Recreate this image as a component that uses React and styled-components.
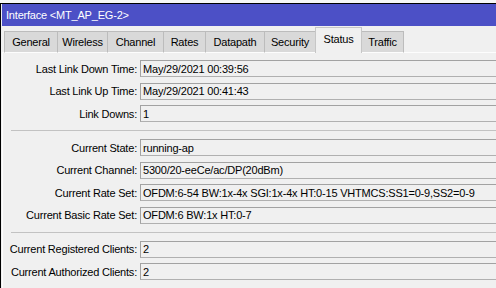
import React from 'react';
import styled, { createGlobalStyle } from 'styled-components';

const GlobalStyle = createGlobalStyle`
  html, body {
    margin: 0;
    padding: 0;
    overflow: hidden;
    background: #f4f4f4;
  }
  body {
    font-family: "Liberation Sans", Arial, sans-serif;
    font-size: 11px;
    letter-spacing: -0.2px;
    color: #000;
  }
`;

const Backdrop = styled.div`
  height: 3px;
  background: #f6f6f6;
`;

const Window = styled.div`
  height: 285px;
  box-sizing: border-box;
  border-top: 1px solid #000;
  border-left: 1px solid #000;
  padding-left: 1px;
  background: #f0f0f0;
  display: flex;
  flex-direction: column;
  overflow: hidden;
`;

const TitleBar = styled.div`
  height: 22px;
  flex-shrink: 0;
  background: #4c50c6;
  color: #fff;
  display: flex;
  align-items: center;
  padding-left: 4px;
`;

const TabRow = styled.div`
  display: flex;
  align-items: flex-end;
  height: 27px;
  flex-shrink: 0;
  padding-left: 2px;
  position: relative;
  z-index: 1;
  margin-bottom: -1px;
`;

const Tab = styled.div`
  width: ${p => p.$w}px;
  height: ${p => (p.$active ? 26 : 22)}px;
  margin-left: -1px;
  box-sizing: border-box;
  display: flex;
  align-items: center;
  justify-content: center;
  padding-bottom: ${p => (p.$active ? 3 : 0)}px;
  background: ${p => (p.$active ? '#f0f0f0' : '#d9d9d9')};
  border: 1px solid ${p => (p.$active ? '#c6c6c6' : '#bcbcbc')};
  border-bottom: ${p => (p.$active ? 'none' : '1px solid #fdfdfd')};
  position: relative;
  z-index: ${p => (p.$active ? 2 : 1)};
  &:first-child {
    margin-left: 0;
  }
`;

const Panel = styled.div`
  flex: 1;
  border-top: 1px solid #fdfdfd;
  border-left: 1px solid #fdfdfd;
  padding-top: 7px;
  display: flex;
  flex-direction: column;
`;

const Group = styled.div`
  display: flex;
  flex-direction: column;
  gap: 5.5px;
`;

const Separator = styled.div`
  height: 1px;
  background: #c2c2c2;
  margin: 8px 0 8px 8px;
`;

const Row = styled.div`
  display: flex;
  align-items: center;
  gap: 3px;
`;

const Label = styled.div`
  width: 134px;
  flex-shrink: 0;
  text-align: right;
  white-space: nowrap;
`;

const Field = styled.div`
  flex: 1;
  min-width: 0;
  height: 17px;
  box-sizing: border-box;
  border: 1px solid #a2a2a2;
  border-right: none;
  border-bottom-color: #b0b0b0;
  padding-left: 2px;
  display: flex;
  align-items: center;
  white-space: nowrap;
  overflow: hidden;
`;

const tabs = [
  { name: 'General', w: 54 },
  { name: 'Wireless', w: 51 },
  { name: 'Channel', w: 57 },
  { name: 'Rates', w: 43 },
  { name: 'Datapath', w: 60 },
  { name: 'Security', w: 52 },
  { name: 'Status', w: 47, active: true },
  { name: 'Traffic', w: 43 },
];

const groups = [
  [
    ['Last Link Down Time:', 'May/29/2021 00:39:56'],
    ['Last Link Up Time:', 'May/29/2021 00:41:43'],
    ['Link Downs:', '1'],
  ],
  [
    ['Current State:', 'running-ap'],
    ['Current Channel:', '5300/20-eeCe/ac/DP(20dBm)'],
    ['Current Rate Set:', 'OFDM:6-54 BW:1x-4x SGI:1x-4x HT:0-15 VHTMCS:SS1=0-9,SS2=0-9'],
    ['Current Basic Rate Set:', 'OFDM:6 BW:1x HT:0-7'],
  ],
  [
    ['Current Registered Clients:', '2'],
    ['Current Authorized Clients:', '2'],
  ],
];

export default function App() {
  return (
    <>
      <GlobalStyle />
      <Backdrop />
      <Window>
        <TitleBar>Interface &lt;MT_AP_EG-2&gt;</TitleBar>
        <TabRow>
          {tabs.map(t => (
            <Tab key={t.name} $w={t.w} $active={t.active}>{t.name}</Tab>
          ))}
        </TabRow>
        <Panel>
          {groups.map((g, i) => (
            <React.Fragment key={i}>
              {i > 0 && <Separator />}
              <Group>
                {g.map(([label, value]) => (
                  <Row key={label}>
                    <Label>{label}</Label>
                    <Field>{value}</Field>
                  </Row>
                ))}
              </Group>
            </React.Fragment>
          ))}
        </Panel>
      </Window>
    </>
  );
}
